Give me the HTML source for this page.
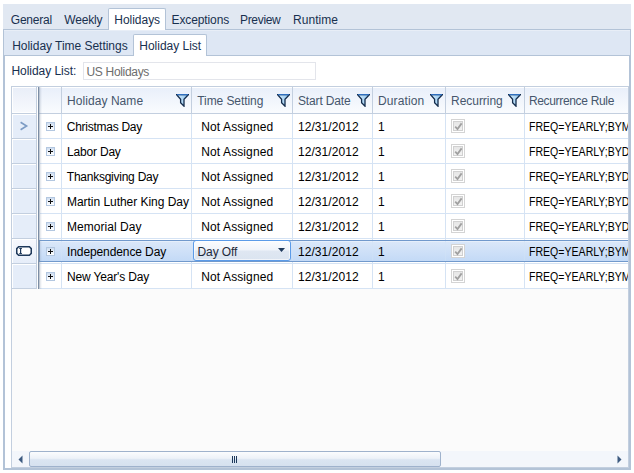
<!DOCTYPE html>
<html><head><meta charset="utf-8">
<style>
*{box-sizing:border-box;margin:0;padding:0}
html,body{width:634px;height:473px;overflow:hidden;background:#fff}
body{position:relative;font-family:"Liberation Sans",sans-serif;font-size:12px}
.a{position:absolute}
.t{position:absolute;white-space:pre;line-height:14px;height:14px}
.nv{color:#18304f}
.hd{color:#46566c}
.rw{color:#000}
</style></head><body>
<div class="a" style="left:3px;top:4px;width:628px;height:26px;background:#e1e8f2"></div>
<div class="a" style="left:108px;top:8px;width:58px;height:22px;background:#fff;border:1px solid #b3c3d7;border-bottom:none;border-radius:2px 2px 0 0"></div>
<div class="t nv" style="left:10.8px;top:13px;letter-spacing:-0.217px;">General</div>
<div class="t nv" style="left:64.3px;top:13px;letter-spacing:-0.18px;">Weekly</div>
<div class="t nv" style="left:114.3px;top:13px;letter-spacing:-0.029px;">Holidays</div>
<div class="t nv" style="left:171.5px;top:13px;letter-spacing:-0.111px;">Exceptions</div>
<div class="t nv" style="left:240.0px;top:13px;letter-spacing:-0.317px;">Preview</div>
<div class="t nv" style="left:293.0px;top:13px;letter-spacing:0.05px;">Runtime</div>
<div class="a" style="left:3px;top:29px;width:628px;height:27px;background:#dee7f4;border:1px solid #b3c3d7"></div>
<div class="a" style="left:4px;top:30px;width:626px;height:1px;background:#e8eef7"></div>
<div class="a" style="left:109px;top:29px;width:56px;height:1px;background:#fff"></div>
<div class="a" style="left:133px;top:34px;width:74px;height:22px;background:#fff;border:1px solid #b3c3d7;border-bottom:none;border-radius:2px 2px 0 0"></div>
<div class="t nv" style="left:12.2px;top:39px;letter-spacing:-0.03px;">Holiday Time Settings</div>
<div class="t nv" style="left:139.3px;top:39px;letter-spacing:-0.018px;">Holiday List</div>
<div class="a" style="left:3px;top:55px;width:628px;height:415px;border:2px solid #b3c3d7;border-top:1px solid #b3c3d7;background:#fff"></div>
<div class="a" style="left:134px;top:55px;width:72px;height:1px;background:#fff"></div>
<div class="t nv" style="left:11.5px;top:64px;letter-spacing:-0.05px;">Holiday List:</div>
<div class="a" style="left:83px;top:62px;width:233px;height:18px;border:1px solid #e3e5eb;background:#fff"></div>
<div class="t " style="left:86.5px;top:65px;letter-spacing:-0.32px;color:#6d6d6d">US Holidays</div>
<div class="a" style="left:11px;top:86px;width:618px;height:382px;border:1px solid #c3cfdf;background:#fbfbfb"></div>
<div class="a" style="left:0;top:0;width:628px;height:467px;overflow:hidden">
<div class="a" style="left:12px;top:87px;width:616px;height:27px;background:linear-gradient(#fff 0,#fff 1px,#e9effa 1px,#f9fbfe 25px);border-bottom:1px solid #c3cfdf"></div>
<div class="a" style="left:40px;top:114px;width:588px;height:175px;background:#fff"></div>
<div class="a" style="left:12px;top:87px;width:25px;height:26px;border:1px solid #fff;border-right:none;box-shadow:inset -1px 0 0 #fff;background:linear-gradient(#e9eef8,#f7f9fd)"></div>
<div class="a" style="left:36px;top:87px;width:1px;height:26px;background:#c3cfdf"></div>
<div class="a" style="left:61px;top:87px;width:1px;height:26px;background:#c3cfdf"></div>
<div class="a" style="left:191px;top:87px;width:1px;height:26px;background:#c3cfdf"></div>
<div class="a" style="left:292px;top:87px;width:1px;height:26px;background:#c3cfdf"></div>
<div class="a" style="left:372px;top:87px;width:1px;height:26px;background:#c3cfdf"></div>
<div class="a" style="left:445px;top:87px;width:1px;height:26px;background:#c3cfdf"></div>
<div class="a" style="left:524px;top:87px;width:1px;height:26px;background:#c3cfdf"></div>
<div class="t hd" style="left:67.1px;top:94px;letter-spacing:0.055px;">Holiday Name</div>
<svg class="a" style="left:176px;top:93px" width="13" height="14" viewBox="0 0 13 14"><defs><linearGradient id="fg" x1="0" y1="0" x2="1" y2="0"><stop offset="0" stop-color="#d6ecfc"/><stop offset="1" stop-color="#8fc6f0"/></linearGradient></defs><path d="M0.6 1.6 L12.4 1.6 L8 6.2 L8 13.2 L4.6 9.8 L4.6 6.2 Z" fill="url(#fg)" stroke="#142c4c" stroke-width="1.3" stroke-linejoin="miter"/><path d="M1 1.6 L12 1.6" stroke="#2f6fc0" stroke-width="1.2"/></svg>
<div class="t hd" style="left:197.3px;top:94px;letter-spacing:-0.082px;">Time Setting</div>
<svg class="a" style="left:277px;top:93px" width="13" height="14" viewBox="0 0 13 14"><defs><linearGradient id="fg" x1="0" y1="0" x2="1" y2="0"><stop offset="0" stop-color="#d6ecfc"/><stop offset="1" stop-color="#8fc6f0"/></linearGradient></defs><path d="M0.6 1.6 L12.4 1.6 L8 6.2 L8 13.2 L4.6 9.8 L4.6 6.2 Z" fill="url(#fg)" stroke="#142c4c" stroke-width="1.3" stroke-linejoin="miter"/><path d="M1 1.6 L12 1.6" stroke="#2f6fc0" stroke-width="1.2"/></svg>
<div class="t hd" style="left:298.0px;top:94px;letter-spacing:-0.156px;">Start Date</div>
<svg class="a" style="left:357px;top:93px" width="13" height="14" viewBox="0 0 13 14"><defs><linearGradient id="fg" x1="0" y1="0" x2="1" y2="0"><stop offset="0" stop-color="#d6ecfc"/><stop offset="1" stop-color="#8fc6f0"/></linearGradient></defs><path d="M0.6 1.6 L12.4 1.6 L8 6.2 L8 13.2 L4.6 9.8 L4.6 6.2 Z" fill="url(#fg)" stroke="#142c4c" stroke-width="1.3" stroke-linejoin="miter"/><path d="M1 1.6 L12 1.6" stroke="#2f6fc0" stroke-width="1.2"/></svg>
<div class="t hd" style="left:378.0px;top:94px;letter-spacing:0.129px;">Duration</div>
<svg class="a" style="left:430px;top:93px" width="13" height="14" viewBox="0 0 13 14"><defs><linearGradient id="fg" x1="0" y1="0" x2="1" y2="0"><stop offset="0" stop-color="#d6ecfc"/><stop offset="1" stop-color="#8fc6f0"/></linearGradient></defs><path d="M0.6 1.6 L12.4 1.6 L8 6.2 L8 13.2 L4.6 9.8 L4.6 6.2 Z" fill="url(#fg)" stroke="#142c4c" stroke-width="1.3" stroke-linejoin="miter"/><path d="M1 1.6 L12 1.6" stroke="#2f6fc0" stroke-width="1.2"/></svg>
<div class="t hd" style="left:451.1px;top:94px;letter-spacing:-0.05px;">Recurring</div>
<svg class="a" style="left:508px;top:93px" width="13" height="14" viewBox="0 0 13 14"><defs><linearGradient id="fg" x1="0" y1="0" x2="1" y2="0"><stop offset="0" stop-color="#d6ecfc"/><stop offset="1" stop-color="#8fc6f0"/></linearGradient></defs><path d="M0.6 1.6 L12.4 1.6 L8 6.2 L8 13.2 L4.6 9.8 L4.6 6.2 Z" fill="url(#fg)" stroke="#142c4c" stroke-width="1.3" stroke-linejoin="miter"/><path d="M1 1.6 L12 1.6" stroke="#2f6fc0" stroke-width="1.2"/></svg>
<div class="t hd" style="left:528.9px;top:94px;letter-spacing:-0.329px;">Recurrence Rule</div>
<div class="a" style="left:12px;top:114px;width:25px;height:25px;background:#e5edf9;border:1px solid #fff;border-right:none;border-bottom:none;box-shadow:inset -1px -1px 0 #fff"></div>
<div class="a" style="left:36px;top:114px;width:1px;height:25px;background:#c3cfdf"></div>
<div class="a" style="left:12px;top:138px;width:25px;height:1px;background:#c3cfdf"></div>
<div class="a" style="left:40px;top:138px;width:588px;height:1px;background:#d5e3f4"></div>
<div class="a" style="left:61px;top:114px;width:1px;height:24px;background:#d5e3f4"></div>
<div class="a" style="left:191px;top:114px;width:1px;height:24px;background:#d5e3f4"></div>
<div class="a" style="left:292px;top:114px;width:1px;height:24px;background:#d5e3f4"></div>
<div class="a" style="left:372px;top:114px;width:1px;height:24px;background:#d5e3f4"></div>
<div class="a" style="left:445px;top:114px;width:1px;height:24px;background:#d5e3f4"></div>
<div class="a" style="left:524px;top:114px;width:1px;height:24px;background:#d5e3f4"></div>
<div class="a" style="left:46px;top:122px;width:9px;height:9px;border:1px solid #b3c7e0;background:linear-gradient(#cddcef,#e9f0f9 50%,#fff)"></div>
<div class="a" style="left:48px;top:126px;width:5px;height:1px;background:#111"></div>
<div class="a" style="left:50px;top:124px;width:1px;height:5px;background:#111"></div>
<div class="t rw" style="left:66.8px;top:120px;letter-spacing:-0.267px;">Christmas Day</div>
<div class="t rw" style="left:201.3px;top:120px;letter-spacing:0.1px;">Not Assigned</div>
<div class="t rw" style="left:298.0px;top:120px;letter-spacing:0.056px;">12/31/2012</div>
<div class="t rw" style="left:378px;top:120px;">1</div>
<div class="a" style="left:451px;top:119px;width:14px;height:14px;border:1px solid #d4d4d4;background:#fff"></div>
<div class="a" style="left:453px;top:121px;width:10px;height:10px;border:1px solid #d0d0d0;background:linear-gradient(#e6e6e6,#f2f2f2)"></div>
<svg class="a" style="left:453px;top:121px" width="10" height="10"><path d="M2.2 5.6 L4.5 8 L8.6 2.4" fill="none" stroke="#a0a0a0" stroke-width="1.8"/></svg>
<div class="t rw" style="left:529.3px;top:120px;transform:scaleX(0.88);transform-origin:0 0;">FREQ=YEARLY;BYM</div>
<div class="a" style="left:12px;top:139px;width:25px;height:25px;background:#e5edf9;border:1px solid #fff;border-right:none;border-bottom:none;box-shadow:inset -1px -1px 0 #fff"></div>
<div class="a" style="left:36px;top:139px;width:1px;height:25px;background:#c3cfdf"></div>
<div class="a" style="left:12px;top:163px;width:25px;height:1px;background:#c3cfdf"></div>
<div class="a" style="left:40px;top:163px;width:588px;height:1px;background:#d5e3f4"></div>
<div class="a" style="left:61px;top:139px;width:1px;height:24px;background:#d5e3f4"></div>
<div class="a" style="left:191px;top:139px;width:1px;height:24px;background:#d5e3f4"></div>
<div class="a" style="left:292px;top:139px;width:1px;height:24px;background:#d5e3f4"></div>
<div class="a" style="left:372px;top:139px;width:1px;height:24px;background:#d5e3f4"></div>
<div class="a" style="left:445px;top:139px;width:1px;height:24px;background:#d5e3f4"></div>
<div class="a" style="left:524px;top:139px;width:1px;height:24px;background:#d5e3f4"></div>
<div class="a" style="left:46px;top:147px;width:9px;height:9px;border:1px solid #b3c7e0;background:linear-gradient(#cddcef,#e9f0f9 50%,#fff)"></div>
<div class="a" style="left:48px;top:151px;width:5px;height:1px;background:#111"></div>
<div class="a" style="left:50px;top:149px;width:1px;height:5px;background:#111"></div>
<div class="t rw" style="left:67.0px;top:145px;letter-spacing:-0.188px;">Labor Day</div>
<div class="t rw" style="left:201.3px;top:145px;letter-spacing:0.1px;">Not Assigned</div>
<div class="t rw" style="left:298.0px;top:145px;letter-spacing:0.056px;">12/31/2012</div>
<div class="t rw" style="left:378px;top:145px;">1</div>
<div class="a" style="left:451px;top:144px;width:14px;height:14px;border:1px solid #d4d4d4;background:#fff"></div>
<div class="a" style="left:453px;top:146px;width:10px;height:10px;border:1px solid #d0d0d0;background:linear-gradient(#e6e6e6,#f2f2f2)"></div>
<svg class="a" style="left:453px;top:146px" width="10" height="10"><path d="M2.2 5.6 L4.5 8 L8.6 2.4" fill="none" stroke="#a0a0a0" stroke-width="1.8"/></svg>
<div class="t rw" style="left:529.3px;top:145px;transform:scaleX(0.88);transform-origin:0 0;">FREQ=YEARLY;BYD</div>
<div class="a" style="left:12px;top:164px;width:25px;height:25px;background:#e5edf9;border:1px solid #fff;border-right:none;border-bottom:none;box-shadow:inset -1px -1px 0 #fff"></div>
<div class="a" style="left:36px;top:164px;width:1px;height:25px;background:#c3cfdf"></div>
<div class="a" style="left:12px;top:188px;width:25px;height:1px;background:#c3cfdf"></div>
<div class="a" style="left:40px;top:188px;width:588px;height:1px;background:#d5e3f4"></div>
<div class="a" style="left:61px;top:164px;width:1px;height:24px;background:#d5e3f4"></div>
<div class="a" style="left:191px;top:164px;width:1px;height:24px;background:#d5e3f4"></div>
<div class="a" style="left:292px;top:164px;width:1px;height:24px;background:#d5e3f4"></div>
<div class="a" style="left:372px;top:164px;width:1px;height:24px;background:#d5e3f4"></div>
<div class="a" style="left:445px;top:164px;width:1px;height:24px;background:#d5e3f4"></div>
<div class="a" style="left:524px;top:164px;width:1px;height:24px;background:#d5e3f4"></div>
<div class="a" style="left:46px;top:172px;width:9px;height:9px;border:1px solid #b3c7e0;background:linear-gradient(#cddcef,#e9f0f9 50%,#fff)"></div>
<div class="a" style="left:48px;top:176px;width:5px;height:1px;background:#111"></div>
<div class="a" style="left:50px;top:174px;width:1px;height:5px;background:#111"></div>
<div class="t rw" style="left:66.8px;top:170px;letter-spacing:-0.247px;">Thanksgiving Day</div>
<div class="t rw" style="left:201.3px;top:170px;letter-spacing:0.1px;">Not Assigned</div>
<div class="t rw" style="left:298.0px;top:170px;letter-spacing:0.056px;">12/31/2012</div>
<div class="t rw" style="left:378px;top:170px;">1</div>
<div class="a" style="left:451px;top:169px;width:14px;height:14px;border:1px solid #d4d4d4;background:#fff"></div>
<div class="a" style="left:453px;top:171px;width:10px;height:10px;border:1px solid #d0d0d0;background:linear-gradient(#e6e6e6,#f2f2f2)"></div>
<svg class="a" style="left:453px;top:171px" width="10" height="10"><path d="M2.2 5.6 L4.5 8 L8.6 2.4" fill="none" stroke="#a0a0a0" stroke-width="1.8"/></svg>
<div class="t rw" style="left:529.3px;top:170px;transform:scaleX(0.88);transform-origin:0 0;">FREQ=YEARLY;BYD</div>
<div class="a" style="left:12px;top:189px;width:25px;height:25px;background:#e5edf9;border:1px solid #fff;border-right:none;border-bottom:none;box-shadow:inset -1px -1px 0 #fff"></div>
<div class="a" style="left:36px;top:189px;width:1px;height:25px;background:#c3cfdf"></div>
<div class="a" style="left:12px;top:213px;width:25px;height:1px;background:#c3cfdf"></div>
<div class="a" style="left:40px;top:213px;width:588px;height:1px;background:#d5e3f4"></div>
<div class="a" style="left:61px;top:189px;width:1px;height:24px;background:#d5e3f4"></div>
<div class="a" style="left:191px;top:189px;width:1px;height:24px;background:#d5e3f4"></div>
<div class="a" style="left:292px;top:189px;width:1px;height:24px;background:#d5e3f4"></div>
<div class="a" style="left:372px;top:189px;width:1px;height:24px;background:#d5e3f4"></div>
<div class="a" style="left:445px;top:189px;width:1px;height:24px;background:#d5e3f4"></div>
<div class="a" style="left:524px;top:189px;width:1px;height:24px;background:#d5e3f4"></div>
<div class="a" style="left:46px;top:197px;width:9px;height:9px;border:1px solid #b3c7e0;background:linear-gradient(#cddcef,#e9f0f9 50%,#fff)"></div>
<div class="a" style="left:48px;top:201px;width:5px;height:1px;background:#111"></div>
<div class="a" style="left:50px;top:199px;width:1px;height:5px;background:#111"></div>
<div class="t rw" style="left:67.0px;top:195px;letter-spacing:-0.038px;">Martin Luther King Day</div>
<div class="t rw" style="left:201.3px;top:195px;letter-spacing:0.1px;">Not Assigned</div>
<div class="t rw" style="left:298.0px;top:195px;letter-spacing:0.056px;">12/31/2012</div>
<div class="t rw" style="left:378px;top:195px;">1</div>
<div class="a" style="left:451px;top:194px;width:14px;height:14px;border:1px solid #d4d4d4;background:#fff"></div>
<div class="a" style="left:453px;top:196px;width:10px;height:10px;border:1px solid #d0d0d0;background:linear-gradient(#e6e6e6,#f2f2f2)"></div>
<svg class="a" style="left:453px;top:196px" width="10" height="10"><path d="M2.2 5.6 L4.5 8 L8.6 2.4" fill="none" stroke="#a0a0a0" stroke-width="1.8"/></svg>
<div class="t rw" style="left:529.3px;top:195px;transform:scaleX(0.88);transform-origin:0 0;">FREQ=YEARLY;BYD</div>
<div class="a" style="left:12px;top:214px;width:25px;height:25px;background:#e5edf9;border:1px solid #fff;border-right:none;border-bottom:none;box-shadow:inset -1px -1px 0 #fff"></div>
<div class="a" style="left:36px;top:214px;width:1px;height:25px;background:#c3cfdf"></div>
<div class="a" style="left:12px;top:238px;width:25px;height:1px;background:#c3cfdf"></div>
<div class="a" style="left:40px;top:238px;width:588px;height:1px;background:#d5e3f4"></div>
<div class="a" style="left:61px;top:214px;width:1px;height:24px;background:#d5e3f4"></div>
<div class="a" style="left:191px;top:214px;width:1px;height:24px;background:#d5e3f4"></div>
<div class="a" style="left:292px;top:214px;width:1px;height:24px;background:#d5e3f4"></div>
<div class="a" style="left:372px;top:214px;width:1px;height:24px;background:#d5e3f4"></div>
<div class="a" style="left:445px;top:214px;width:1px;height:24px;background:#d5e3f4"></div>
<div class="a" style="left:524px;top:214px;width:1px;height:24px;background:#d5e3f4"></div>
<div class="a" style="left:46px;top:222px;width:9px;height:9px;border:1px solid #b3c7e0;background:linear-gradient(#cddcef,#e9f0f9 50%,#fff)"></div>
<div class="a" style="left:48px;top:226px;width:5px;height:1px;background:#111"></div>
<div class="a" style="left:50px;top:224px;width:1px;height:5px;background:#111"></div>
<div class="t rw" style="left:67.0px;top:220px;letter-spacing:0.045px;">Memorial Day</div>
<div class="t rw" style="left:201.3px;top:220px;letter-spacing:0.1px;">Not Assigned</div>
<div class="t rw" style="left:298.0px;top:220px;letter-spacing:0.056px;">12/31/2012</div>
<div class="t rw" style="left:378px;top:220px;">1</div>
<div class="a" style="left:451px;top:219px;width:14px;height:14px;border:1px solid #d4d4d4;background:#fff"></div>
<div class="a" style="left:453px;top:221px;width:10px;height:10px;border:1px solid #d0d0d0;background:linear-gradient(#e6e6e6,#f2f2f2)"></div>
<svg class="a" style="left:453px;top:221px" width="10" height="10"><path d="M2.2 5.6 L4.5 8 L8.6 2.4" fill="none" stroke="#a0a0a0" stroke-width="1.8"/></svg>
<div class="t rw" style="left:529.3px;top:220px;transform:scaleX(0.88);transform-origin:0 0;">FREQ=YEARLY;BYD</div>
<div class="a" style="left:12px;top:239px;width:25px;height:25px;background:linear-gradient(#f6f8fd,#e5edf9);border:1px solid #fff;border-right:none;border-bottom:none;box-shadow:inset -1px -1px 0 #fff"></div>
<div class="a" style="left:36px;top:239px;width:1px;height:25px;background:#c3cfdf"></div>
<div class="a" style="left:12px;top:263px;width:25px;height:1px;background:#c3cfdf"></div>
<div class="a" style="left:40px;top:263px;width:588px;height:1px;background:#d5e3f4"></div>
<div class="a" style="left:61px;top:239px;width:1px;height:24px;background:#d5e3f4"></div>
<div class="a" style="left:191px;top:239px;width:1px;height:24px;background:#d5e3f4"></div>
<div class="a" style="left:292px;top:239px;width:1px;height:24px;background:#d5e3f4"></div>
<div class="a" style="left:372px;top:239px;width:1px;height:24px;background:#d5e3f4"></div>
<div class="a" style="left:445px;top:239px;width:1px;height:24px;background:#d5e3f4"></div>
<div class="a" style="left:524px;top:239px;width:1px;height:24px;background:#d5e3f4"></div>
<div class="a" style="left:39px;top:240px;width:590px;height:22px;border:1px solid #7199cc;background:linear-gradient(#e6effb 0,#e6effb 1px,#dae7f9 1px,#c2d9f6 21px)"></div>
<div class="a" style="left:61px;top:241px;width:1px;height:20px;background:linear-gradient(#d8e6f8,#c9def6)"></div>
<div class="a" style="left:191px;top:241px;width:1px;height:20px;background:linear-gradient(#d8e6f8,#c9def6)"></div>
<div class="a" style="left:292px;top:241px;width:1px;height:20px;background:linear-gradient(#d8e6f8,#c9def6)"></div>
<div class="a" style="left:372px;top:241px;width:1px;height:20px;background:linear-gradient(#d8e6f8,#c9def6)"></div>
<div class="a" style="left:445px;top:241px;width:1px;height:20px;background:linear-gradient(#d8e6f8,#c9def6)"></div>
<div class="a" style="left:524px;top:241px;width:1px;height:20px;background:linear-gradient(#d8e6f8,#c9def6)"></div>
<div class="a" style="left:46px;top:247px;width:9px;height:9px;border:1px solid #b3c7e0;background:linear-gradient(#cddcef,#e9f0f9 50%,#fff)"></div>
<div class="a" style="left:48px;top:251px;width:5px;height:1px;background:#111"></div>
<div class="a" style="left:50px;top:249px;width:1px;height:5px;background:#111"></div>
<div class="t rw" style="left:67.0px;top:245px;letter-spacing:-0.1px;">Independence Day</div>
<div class="a" style="left:193px;top:240px;width:98px;height:21px;border:1px solid #5b9be8;border-radius:3px;box-shadow:inset 0 0 0 1px rgba(255,255,255,0.6);background:linear-gradient(#fbfcfe,#f0f4fa 45%,#dfe7f2 55%,#dbe4f0)"></div>
<div class="t " style="left:197.5px;top:245px;letter-spacing:-0.1px;color:#1e2a3a">Day Off</div>
<svg class="a" style="left:278px;top:248px" width="8" height="5"><path d="M0 0 L7 0 L3.5 4 Z" fill="#1e395b"/></svg>
<div class="t rw" style="left:298.0px;top:245px;letter-spacing:0.056px;">12/31/2012</div>
<div class="t rw" style="left:378px;top:245px;">1</div>
<div class="a" style="left:451px;top:244px;width:14px;height:14px;border:1px solid #d4d4d4;background:#fff"></div>
<div class="a" style="left:453px;top:246px;width:10px;height:10px;border:1px solid #d0d0d0;background:linear-gradient(#e6e6e6,#f2f2f2)"></div>
<svg class="a" style="left:453px;top:246px" width="10" height="10"><path d="M2.2 5.6 L4.5 8 L8.6 2.4" fill="none" stroke="#a0a0a0" stroke-width="1.8"/></svg>
<div class="t rw" style="left:529.3px;top:245px;transform:scaleX(0.88);transform-origin:0 0;">FREQ=YEARLY;BYM</div>
<div class="a" style="left:12px;top:264px;width:25px;height:25px;background:#e5edf9;border:1px solid #fff;border-right:none;border-bottom:none;box-shadow:inset -1px -1px 0 #fff"></div>
<div class="a" style="left:36px;top:264px;width:1px;height:25px;background:#c3cfdf"></div>
<div class="a" style="left:12px;top:288px;width:25px;height:1px;background:#c3cfdf"></div>
<div class="a" style="left:40px;top:288px;width:588px;height:1px;background:#d5e3f4"></div>
<div class="a" style="left:61px;top:264px;width:1px;height:24px;background:#d5e3f4"></div>
<div class="a" style="left:191px;top:264px;width:1px;height:24px;background:#d5e3f4"></div>
<div class="a" style="left:292px;top:264px;width:1px;height:24px;background:#d5e3f4"></div>
<div class="a" style="left:372px;top:264px;width:1px;height:24px;background:#d5e3f4"></div>
<div class="a" style="left:445px;top:264px;width:1px;height:24px;background:#d5e3f4"></div>
<div class="a" style="left:524px;top:264px;width:1px;height:24px;background:#d5e3f4"></div>
<div class="a" style="left:46px;top:272px;width:9px;height:9px;border:1px solid #b3c7e0;background:linear-gradient(#cddcef,#e9f0f9 50%,#fff)"></div>
<div class="a" style="left:48px;top:276px;width:5px;height:1px;background:#111"></div>
<div class="a" style="left:50px;top:274px;width:1px;height:5px;background:#111"></div>
<div class="t rw" style="left:67.0px;top:270px;letter-spacing:-0.169px;">New Year's Day</div>
<div class="t rw" style="left:201.3px;top:270px;letter-spacing:0.1px;">Not Assigned</div>
<div class="t rw" style="left:298.0px;top:270px;letter-spacing:0.056px;">12/31/2012</div>
<div class="t rw" style="left:378px;top:270px;">1</div>
<div class="a" style="left:451px;top:269px;width:14px;height:14px;border:1px solid #d4d4d4;background:#fff"></div>
<div class="a" style="left:453px;top:271px;width:10px;height:10px;border:1px solid #d0d0d0;background:linear-gradient(#e6e6e6,#f2f2f2)"></div>
<svg class="a" style="left:453px;top:271px" width="10" height="10"><path d="M2.2 5.6 L4.5 8 L8.6 2.4" fill="none" stroke="#a0a0a0" stroke-width="1.8"/></svg>
<div class="t rw" style="left:529.3px;top:270px;transform:scaleX(0.88);transform-origin:0 0;">FREQ=YEARLY;BYM</div>
<svg class="a" style="left:19px;top:121px" width="10" height="10"><path d="M1.6 1.3 L7.6 5 L1.6 8.7" fill="none" stroke="#7c9bc4" stroke-width="1.6"/></svg>
<svg class="a" style="left:16px;top:246px" width="16" height="10"><path d="M2.6 0.75 L13.4 0.75 L15.25 2.6 L15.25 7.4 L13.4 9.25 L2.6 9.25 L0.75 7.4 L0.75 2.6 Z" fill="#fff" stroke="#1e395b" stroke-width="1.5"/><path d="M3.3 2.5 L5.9 2.5 M4.6 2.5 L4.6 7.5 M3.3 7.5 L5.9 7.5" fill="none" stroke="#1e395b" stroke-width="1.2"/></svg>
<div class="a" style="left:37px;top:87px;width:1px;height:202px;background:#fff"></div>
<div class="a" style="left:38px;top:87px;width:1px;height:202px;background:#7d8ea5"></div>
<div class="a" style="left:39px;top:87px;width:1px;height:202px;background:rgba(125,142,165,0.45)"></div>
<div class="a" style="left:40px;top:87px;width:1px;height:202px;background:rgba(125,142,165,0.18)"></div>
<div class="a" style="left:41px;top:87px;width:1px;height:202px;background:rgba(125,142,165,0.06)"></div>
<div class="a" style="left:12px;top:451px;width:616px;height:16px;background:#f3f6fb"></div>
<svg class="a" style="left:18px;top:455px" width="5" height="9"><path d="M0.5 4.5 L4.5 0.5 L4.5 8.5 Z" fill="#3d5a80"/></svg>
<svg class="a" style="left:617px;top:455px" width="5" height="9"><path d="M4.5 4.5 L0.5 0.5 L0.5 8.5 Z" fill="#3d5a80"/></svg>
<div class="a" style="left:29px;top:451px;width:412px;height:16px;border:1px solid #9fb2cc;border-radius:2px;background:linear-gradient(#fbfcfe,#edf2f8 45%,#dbe5f2 55%,#d6e1ef)"></div>
<div class="a" style="left:232px;top:456px;width:1px;height:7px;background:#1e395b"></div>
<div class="a" style="left:234px;top:456px;width:1px;height:7px;background:#1e395b"></div>
<div class="a" style="left:236px;top:456px;width:1px;height:7px;background:#1e395b"></div>
</div>
</body></html>
